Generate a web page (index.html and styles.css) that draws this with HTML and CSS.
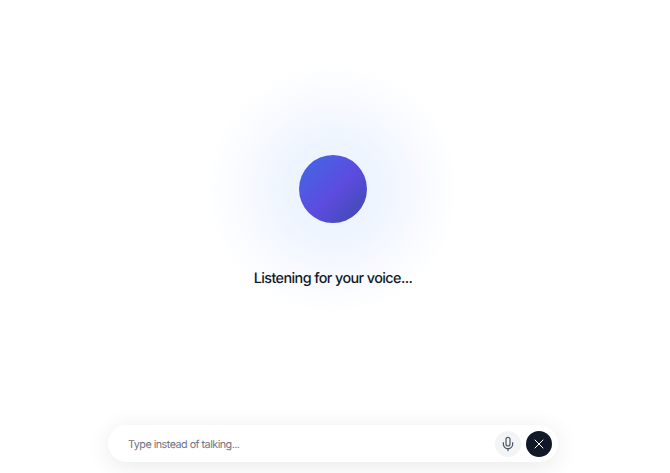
FILE: index.html
```html
<!DOCTYPE html>
<html lang="en">
<head>
<meta charset="utf-8">
<title>Voice</title>
<link rel="stylesheet" href="styles.css">
</head>
<body>
<div class="app">
  <main class="stage">
    <div class="orb-wrap">
      <div class="halo"></div>
      <div class="orb"></div>
    </div>
    <p class="status">Listening for your voice...</p>
  </main>
  <form class="bar">
    <input class="field" type="text" placeholder="Type instead of talking...">
    <button class="btn btn-mic" type="button" aria-label="Microphone">
      <svg width="16" height="16" viewBox="0 0 24 24" fill="none" stroke="currentColor" stroke-width="1.8" stroke-linecap="round" stroke-linejoin="round"><path d="M12 2a3 3 0 0 0-3 3v7a3 3 0 0 0 6 0V5a3 3 0 0 0-3-3Z"/><path d="M19 10v2a7 7 0 0 1-14 0v-2"/><line x1="12" y1="19" x2="12" y2="22"/></svg>
    </button>
    <button class="btn btn-close" type="button" aria-label="Close">
      <svg width="16" height="16" viewBox="0 0 24 24" fill="none" stroke="currentColor" stroke-width="1.5" stroke-linecap="round" stroke-linejoin="round"><path d="M18 6 6 18"/><path d="m6 6 12 12"/></svg>
    </button>
  </form>
</div>
</body>
</html>
```
FILE: styles.css
```css
* { box-sizing: border-box; }
html, body { margin: 0; height: 100%; background: #fff; overflow: hidden; }
body { font-family: Inter, "Liberation Sans", sans-serif; text-rendering: geometricPrecision; }
.app { width: 666px; height: 473px; display: flex; flex-direction: column; align-items: center; }
.stage { display: flex; flex-direction: column; align-items: center; padding-top: 155px; flex: 1; }
.orb-wrap { position: relative; width: 68px; height: 68px; }
.halo { position: absolute; left: 50%; top: 50%; width: 252px; height: 252px; margin: -126px 0 0 -126px; border-radius: 50%; background: radial-gradient(circle closest-side, #edf3fe 0%, #eff5fe 38%, #f6f9ff 65%, #fcfdff 88%, #ffffff 100%); }
.orb { position: relative; width: 68px; height: 68px; border-radius: 50%; background: linear-gradient(135deg, #3f6ae4 0%, #5d4bdf 55%, #3a4aa8 100%); }
.status { position: relative; margin: 47px 0 0; font-size: 14.4px; letter-spacing: -0.59px; line-height: 18px; font-weight: 500; color: #111827; }
.bar { width: 450px; height: 37px; margin-bottom: 11px; display: flex; align-items: center; gap: 5px; padding: 0 6px 0 18px; border-radius: 19px; background: #fff; box-shadow: 0 4px 24px rgba(0, 0, 0, 0.09); }
.field { flex: 1; min-width: 0; padding: 1px 0 0 2px; border: 0; outline: 0; background: transparent; font: 400 10.8px Inter, "Liberation Sans", sans-serif; letter-spacing: -0.53px; color: #111827; text-rendering: geometricPrecision; }
.field::placeholder { color: #6f7583; opacity: 1; }
.btn { width: 26px; height: 26px; padding: 0; border: 0; border-radius: 50%; display: flex; align-items: center; justify-content: center; }
.btn-mic { background: #f3f4f6; color: #4b5563; }
.btn-close { background: #111827; color: #fff; }
```
